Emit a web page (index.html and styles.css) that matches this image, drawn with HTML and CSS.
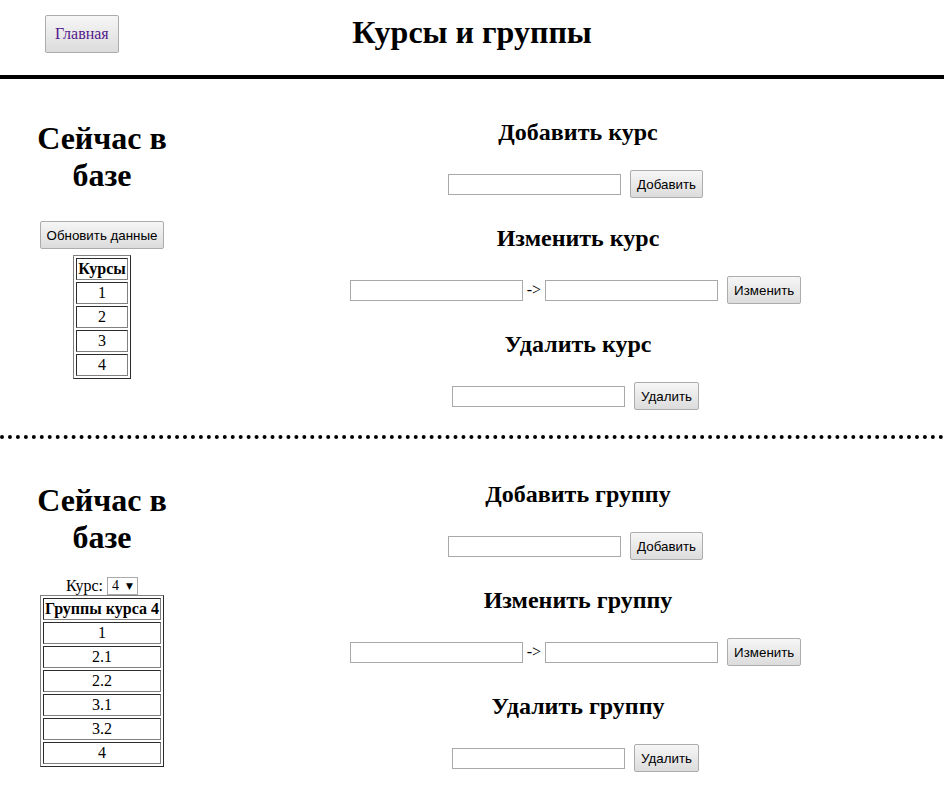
FILE: index.html
```html
<!DOCTYPE html>
<html lang="ru">
<head>
<meta charset="utf-8">
<title>Курсы и группы</title>
<link rel="stylesheet" href="styles.css">
</head>
<body>
<header class="topbar">
  <div class="topbar-left"><button class="btn btn-home" type="button">Главная</button></div>
  <h1 class="page-title">Курсы и группы</h1>
  <div class="topbar-right"></div>
</header>

<section class="panel">
  <aside class="db">
    <h1 class="db-title">Сейчас в базе</h1>
    <button class="btn btn-refresh" type="button">Обновить данные</button>
    <table class="db-table">
      <thead><tr><th>Курсы</th></tr></thead>
      <tbody>
        <tr><td>1</td></tr>
        <tr><td>2</td></tr>
        <tr><td>3</td></tr>
        <tr><td>4</td></tr>
      </tbody>
    </table>
  </aside>
  <div class="forms">
    <h2 class="form-title">Добавить курс</h2>
    <div class="form-row"><input class="field" type="text"><button class="btn" type="button">Добавить</button></div>
    <h2 class="form-title">Изменить курс</h2>
    <div class="form-row"><input class="field" type="text"><span class="sep">-&gt;</span><input class="field" type="text"><button class="btn" type="button">Изменить</button></div>
    <h2 class="form-title">Удалить курс</h2>
    <div class="form-row"><input class="field" type="text"><button class="btn" type="button">Удалить</button></div>
  </div>
</section>

<section class="panel panel-last">
  <aside class="db">
    <h1 class="db-title">Сейчас в базе</h1>
    <div class="course-pick">
      <label class="course-label" for="course">Курс:</label>
      <span class="select-wrap"><select id="course" class="select"><option>1</option><option>2</option><option>3</option><option selected>4</option></select></span>
    </div>
    <table class="db-table db-table-groups">
      <thead><tr><th>Группы курса 4</th></tr></thead>
      <tbody>
        <tr><td>1</td></tr>
        <tr><td>2.1</td></tr>
        <tr><td>2.2</td></tr>
        <tr><td>3.1</td></tr>
        <tr><td>3.2</td></tr>
        <tr><td>4</td></tr>
      </tbody>
    </table>
  </aside>
  <div class="forms">
    <h2 class="form-title">Добавить группу</h2>
    <div class="form-row"><input class="field" type="text"><button class="btn" type="button">Добавить</button></div>
    <h2 class="form-title">Изменить группу</h2>
    <div class="form-row"><input class="field" type="text"><span class="sep">-&gt;</span><input class="field" type="text"><button class="btn" type="button">Изменить</button></div>
    <h2 class="form-title">Удалить группу</h2>
    <div class="form-row"><input class="field" type="text"><button class="btn" type="button">Удалить</button></div>
  </div>
</section>
</body>
</html>
```

FILE: styles.css
```css
html, body {
  margin: 0;
  padding: 0;
  background: #fff;
}

body {
  font-family: "Liberation Serif", "Times New Roman", serif;
  font-size: 16px;
  color: #000;
}

/* Header */
.topbar {
  display: grid;
  grid-template-columns: 1fr auto 1fr;
  align-items: start;
  height: 75px;
  border-bottom: 4px solid #000;
}

.topbar-left {
  padding: 15px 0 0 45px;
}

.page-title {
  margin: 14px 0 0;
  font-size: 32px;
  font-weight: bold;
  line-height: 37px;
  text-align: center;
}

/* Buttons */
.btn {
  box-sizing: border-box;
  height: 28px;
  padding: 0 6px;
  font-family: "Liberation Sans", Arial, sans-serif;
  font-size: 13.33px;
  color: #000;
  background: linear-gradient(#f6f6f6, #dcdcdc);
  border: 1px solid #acacac;
  border-radius: 2px;
  cursor: pointer;
}

.btn-home {
  height: 38px;
  padding: 0 9px;
  font-family: "Liberation Serif", "Times New Roman", serif;
  font-size: 16px;
  color: #551a8b;
}

/* Panels */
.panel {
  display: grid;
  grid-template-columns: 204px 1fr;
  column-gap: 3px;
  border-bottom: 4px dotted #000;
}

.panel-last {
  border-bottom: none;
  padding-top: 2px;
}

.db {
  display: flex;
  flex-direction: column;
  align-items: center;
  padding-top: 41px;
}

.db-title {
  margin: 0;
  padding: 0 20px;
  font-size: 32px;
  font-weight: bold;
  line-height: 37px;
  text-align: center;
}

.btn-refresh {
  margin-top: 27px;
}

.db-table {
  margin-top: 6px;
  border: 1px outset #808080;
  border-spacing: 2px;
}

.db-table th,
.db-table td {
  border: 1px inset #808080;
  padding: 1px;
  line-height: 18px;
  text-align: center;
}

.db-table-groups {
  margin-top: 0;
}

.course-pick {
  display: flex;
  align-items: center;
  gap: 4px;
  height: 19px;
  margin-top: 20px;
}

.select-wrap {
  position: relative;
  display: inline-block;
}

.select {
  appearance: none;
  -webkit-appearance: none;
  box-sizing: border-box;
  display: block;
  width: 31px;
  height: 18px;
  margin: 0;
  padding: 0 0 0 4px;
  font-family: "Liberation Serif", "Times New Roman", serif;
  font-size: 14px;
  color: #000;
  background: #fff;
  border: 1px solid #a9a9a9;
  border-radius: 0;
}

.select-wrap::after {
  content: "▼";
  position: absolute;
  right: 5px;
  top: 4px;
  font-size: 9px;
  line-height: 10px;
  font-family: "DejaVu Sans", sans-serif;
  pointer-events: none;
}

/* Forms */
.forms {
  display: flex;
  flex-direction: column;
  align-items: center;
  padding: 39px 0 25px;
}

.form-title {
  margin: 0 0 24px;
  padding-left: 5px;
  font-size: 24px;
  font-weight: bold;
  line-height: 28px;
  text-align: center;
}

.form-row {
  display: flex;
  align-items: center;
  height: 28px;
  margin-bottom: 26px;
}

.form-row:last-child {
  margin-bottom: 0;
}

.field {
  box-sizing: border-box;
  width: 173px;
  height: 21px;
  margin: 0;
  padding: 1px 2px;
  border: 1px solid #a9a9a9;
  border-radius: 0;
  background: #fff;
  font-family: "Liberation Sans", Arial, sans-serif;
  font-size: 13.33px;
}

.sep {
  margin: 0 4px;
}

.field + .btn {
  margin-left: 9px;
}
```
